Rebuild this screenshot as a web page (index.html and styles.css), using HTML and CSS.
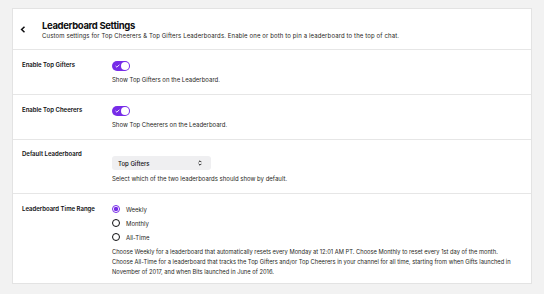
FILE: index.html
```html
<!DOCTYPE html>
<html>
<head>
<meta charset="utf-8">
<link rel="stylesheet" href="styles.css">
</head>
<body>
<div class="card">
  <div class="header">
    <button class="back" aria-label="Back">
      <svg width="6" height="7" viewBox="0 0 6 7"><path d="M4.5 0.8 L1.6 3.5 L4.5 6.2" fill="none" stroke="#0e0e10" stroke-width="1.5"/></svg>
    </button>
    <div class="head-text">
      <h1 class="title">Leaderboard Settings</h1>
      <p class="subtitle">Custom settings for Top Cheerers &amp; Top Gifters Leaderboards. Enable one or both to pin a leaderboard to the top of chat.</p>
    </div>
  </div>

  <div class="row">
    <div class="label">Enable Top Gifters</div>
    <div class="control">
      <span class="toggle"><svg class="check" width="5" height="4" viewBox="0 0 5 4"><path d="M0.6 2 L1.9 3.2 L4.4 0.7" fill="none" stroke="#fff" stroke-width="0.9"/></svg><span class="knob"></span></span>
      <p class="desc">Show Top Gifters on the Leaderboard.</p>
    </div>
  </div>

  <div class="row">
    <div class="label">Enable Top Cheerers</div>
    <div class="control">
      <span class="toggle"><svg class="check" width="5" height="4" viewBox="0 0 5 4"><path d="M0.6 2 L1.9 3.2 L4.4 0.7" fill="none" stroke="#fff" stroke-width="0.9"/></svg><span class="knob"></span></span>
      <p class="desc">Show Top Cheerers on the Leaderboard.</p>
    </div>
  </div>

  <div class="row row-select">
    <div class="label">Default Leaderboard</div>
    <div class="control control-select">
      <div class="select">
        <span>Top Gifters</span>
        <svg width="4" height="6" viewBox="0 0 4 6"><path d="M0.6 2.2 L2 0.8 L3.4 2.2 M0.6 3.8 L2 5.2 L3.4 3.8" fill="none" stroke="#0e0e10" stroke-width="0.9"/></svg>
      </div>
      <p class="desc">Select which of the two leaderboards should show by default.</p>
    </div>
  </div>

  <div class="row row-range">
    <div class="label label-range">Leaderboard Time Range</div>
    <div class="control">
      <div class="radios">
        <div class="radio-row"><span class="radio checked"></span><span class="radio-label">Weekly</span></div>
        <div class="radio-row"><span class="radio"></span><span class="radio-label">Monthly</span></div>
        <div class="radio-row"><span class="radio"></span><span class="radio-label">All-Time</span></div>
      </div>
      <p class="para">Choose Weekly for a leaderboard that automatically resets every Monday at 12:01 AM PT. Choose Monthly to reset every 1st day of the month. Choose All-Time for a leaderboard that tracks the Top Gifters and/or Top Cheerers in your channel for all time, starting from when Gifts launched in November of 2017, and when Bits launched in June of 2016.</p>
    </div>
  </div>
</div>
</body>
</html>
```

FILE: styles.css
```css
* { box-sizing: border-box; }
html, body { margin: 0; padding: 0; }
body {
  background: #f2f2f2;
  font-family: Inter, "Noto Sans", sans-serif;
  color: #0e0e10;
  padding: 8px 12px 10px 12px;
}
.card {
  width: 520px;
  height: 276px;
  background: #fff;
  border: 1px solid #e3e3e3;
  display: flex;
  flex-direction: column;
}
.header {
  flex: 0 0 41px;
  display: flex;
  align-items: flex-start;
  padding: 10px 0 0 7px;
  border-bottom: 1px solid #e6e6e6;
}
.back {
  border: 0;
  background: none;
  padding: 0;
  width: 22px;
  height: 8px;
  margin-top: 6px;
  display: flex;
  align-items: center;
  justify-content: flex-start;
}
.title {
  margin: 0;
  font-size: 9.5px;
  line-height: 13px;
  font-weight: 700;
  letter-spacing: -0.35px;
}
.subtitle {
  margin: 0;
  font-size: 6px;
  line-height: 8px;
  letter-spacing: 0.12px;
  color: #1f1f23;
}
.row {
  flex: 0 0 auto;
  display: grid;
  grid-template-columns: 90px 1fr;
  padding: 11px 9px 10px 9px;
  border-bottom: 1px solid #e6e6e6;
}
.row-select { padding: 10px 9px 10px 9px; }
.row-range { flex: 1 1 auto; border-bottom: 0; padding: 10px 9px 0 9px; }
.label {
  font-size: 6px;
  line-height: 8px;
  font-weight: 600;
}
.label-range { padding-top: 1px; }
.control { display: flex; flex-direction: column; align-items: flex-start; }
.control-select { padding-top: 6px; }
.toggle {
  width: 18px;
  height: 10px;
  border-radius: 5px;
  background: #772ce8;
  position: relative;
  display: block;
}
.check { position: absolute; left: 3px; top: 3px; }
.knob {
  position: absolute;
  right: 1px;
  top: 1px;
  width: 8px;
  height: 8px;
  border-radius: 50%;
  background: #fff;
}
.desc {
  margin: 5px 0 0 0;
  font-size: 6px;
  line-height: 8px;
  color: #1f1f23;
}
.select {
  width: 99px;
  height: 14px;
  background: #efeff1;
  border-radius: 3px;
  display: flex;
  align-items: center;
  justify-content: space-between;
  padding: 0 9px 0 6px;
  font-size: 6px;
  font-weight: 500;
}
.radios { display: flex; flex-direction: column; margin-top: -2px; }
.radio-row {
  height: 14px;
  display: flex;
  align-items: center;
  gap: 6px;
  font-size: 6px;
}
.radio {
  width: 8px;
  height: 8px;
  border-radius: 50%;
  border: 1.5px solid #0e0e10;
  display: block;
}
.radio.checked {
  border-color: #772ce8;
  background: radial-gradient(circle, #772ce8 0 2px, #fff 2.3px);
}
.radio-label { color: #1f1f23; }
.para {
  margin: 3px 0 0 0;
  font-size: 5.75px;
  line-height: 10px;
  color: #1f1f23;
  width: 407px;
}
```
